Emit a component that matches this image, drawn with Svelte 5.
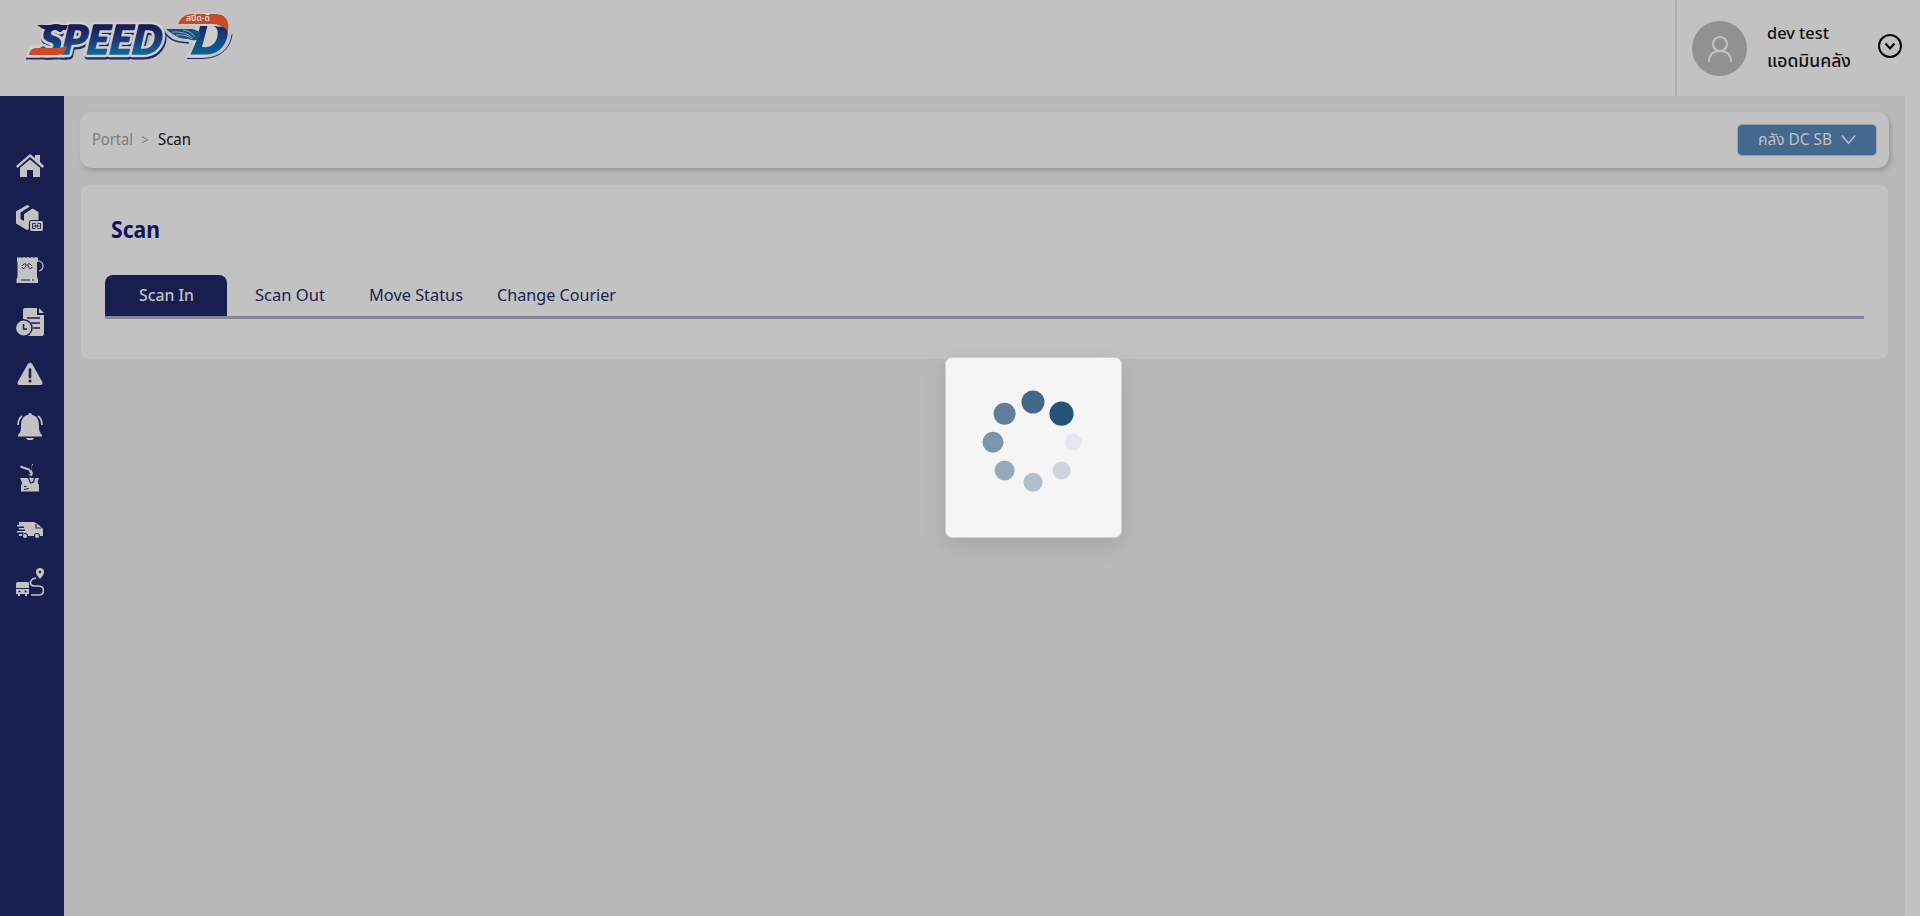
<script>
  const tabs = [
    { label: 'Scan In', left: 0, width: 122, text: 55 },
    { label: 'Scan Out', left: 28, width: 70, text: 70 },
    { label: 'Move Status', left: 44, width: 94, text: 94 },
    { label: 'Change Courier', left: 34, width: 119, text: 119 }
  ];
  const dots = [
    [60, 19, 11.5, '#456789'], [88.5, 30.7, 12.1, '#285378'],
    [100.3, 59, 8.5, '#e5e9ed'], [88.5, 87.5, 9, '#cdd4df'],
    [60, 99.3, 9.5, '#b1bfcc'], [31.6, 87.5, 10, '#96a9bb'],
    [20, 59.2, 10.5, '#7b95ab'], [31.6, 30.7, 11, '#617f9b']
  ];
</script>

{#snippet label(text, width, size, weight = 400)}
  <svg class="label" width={width} height="30" aria-label={text}>
    <text x="0" y="20" font-size={size} font-weight={weight} textLength={width} lengthAdjust="spacingAndGlyphs">{text}</text>
  </svg>
{/snippet}

<div class="page">
  <header>
    <svg class="logo" width="240" height="80" viewBox="10 0 240 80">
      <defs>
        <linearGradient id="blue" x1="0" y1="0" x2="0" y2="1">
          <stop offset=".25" stop-color="#1b1b59" /><stop offset=".6" stop-color="#174381" /><stop offset=".85" stop-color="#08739d" />
        </linearGradient>
        <linearGradient id="dBlue" gradientUnits="userSpaceOnUse" x1="0" y1="26" x2="0" y2="55">
          <stop stop-color="#1c2763" /><stop offset="1" stop-color="#08669c" />
        </linearGradient>
      </defs>
      <path d="M27 58.500h40l4-6" fill="none" stroke="#292568" stroke-width="2" />
      <g class="word" transform="translate(40 54) skewX(-6)">
        <text x="1" y="1.500" textLength="122" lengthAdjust="spacingAndGlyphs" fill="#292568" stroke="#292568" stroke-width="7">SPEED</text>
        <text x="0" y="0" textLength="122" lengthAdjust="spacingAndGlyphs" fill="#d0d0d0" stroke="#d0d0d0" stroke-width="6.500">SPEED</text>
      </g>
      <path d="M27 57.500l4-12h40l-5 12z" fill="#d0d0d0" />
      <g class="word" transform="translate(40 54) skewX(-6)">
        <text x="0" y="0" textLength="122" lengthAdjust="spacingAndGlyphs" fill="url(#blue)" stroke="url(#blue)" stroke-width="1.500">SPEED</text>
      </g>
      <path d="M38 25h31l-2 5H50l-6-1z" fill="#1b1b59" />
      <path d="M30 55q1-7 7-7h22q6 0 9-3-1 10-10 10z" fill="#c94a26" />
      <path d="M188 58.500h14c18 0 29-9 31-24" fill="none" stroke="#292568" />
      <path d="M178 24c3-8 9-11 18-11h20c12 0 16 9 13 21-3 14-11 23-26 23h-16l7-14-25-11 10-3h16l5-3z" fill="#cecece" />
      <path d="M179 24c3-7 7-10 15-10h22c10 0 15 6 13 17l-2 6c0-8-5-13-13-13z" fill="#c94a26" />
      <path d="M201 26h7.500l-5.500 21c9 1 13-3 15-9 2-7 0-11-4-12l10 1c5 2 5.500 7 4 11-3 10-10 16.500-21 16.500h-15.500l6-14z" fill="url(#dBlue)" />
      <path d="M166 33q6 8 15 9l9 1" fill="none" stroke="#292568" stroke-width="1.300" />
      <path d="M167 29h23c7 0 11 2 12 7-2 5-7 5-13 3-9 0-15-4-22-10z" fill="#175084" />
      <path d="M173 32q13-1 21 6m-17-3q10-1 16 4m-9-9q8 1 12 7" fill="none" stroke="#c5c9cf" stroke-width=".7" />
      <text class="tiny" x="187" y="21" textLength="24" lengthAdjust="spacingAndGlyphs">สปีด-ดี</text>
    </svg>
    <div class="profile">
      <div class="avatar">
        <svg width="26" height="28" viewBox="0 0 26 28" fill="none" stroke="#c2c2c2" stroke-width="2"><circle cx="13" cy="9" r="7" /><path d="M2 27c0-7 4-11 11-11s11 4 11 11" /></svg>
      </div>
      <div class="who">{@render label('dev test', 62, 17, 500)}{@render label('แอดมินคลัง', 84, 17.5, 500)}</div>
      <svg class="toggle" width="26" height="26" viewBox="0 0 26 26" fill="none" stroke="#050505" stroke-width="2"><circle cx="13" cy="13" r="11" /><path d="m8.500 10.500 4.500 5 4.500-5" /></svg>
    </div>
  </header>
  <div class="body">
    <nav>
      <svg viewBox="0 0 28 28"><path d="M0 14 14 2l5 4V3h5v7l4 4-1.500 2L14 5 1.500 16z" /><path d="m14 7.500 10 8.300V25h-7v-7h-6v7H4v-9.200z" /></svg>
      <svg viewBox="0 0 28 28"><path d="M0 7.500 11 1l3 1.500L4.500 8.500V15L8 17v-7l8.500-5.500L22.500 8v12L11 26 0 19.500z" /><rect x="13.500" y="16.500" width="14" height="11" rx="2" stroke="#191e50" stroke-width="1.200" /><path d="M16.500 19.500h3m2 0h3v5h-3m-2 0h-3v-5m3 1v3m2-3v3m-4-1.500h6" fill="none" stroke="#191e50" stroke-width=".9" /></svg>
      <svg viewBox="0 0 28 28"><path d="M1 1q1.500 1.500 3 0 2 1.500 4 0 2 1.500 4 0 2 1.500 4 0 2 1.500 4 0l2 1v4H1zM1.500 6h19.500v15l1 2v4H.5v-4l1-2z" /><path d="M5 24h9m2 0h2M6 10c2-3 5-3 4 0-1 3-4 3-4 1m10-1c-2-3-5-3-4 0 1 3 4 3 4 1" fill="none" stroke="#191e50" /><path d="M22 5h1q4 1 4 5t-4 5" fill="none" stroke="#c2c2c2" stroke-width="1.200" /></svg>
      <svg viewBox="0 0 28 28"><path d="M7 2q0-2 2-2h12v7h7v19q0 2-2 2H7z" /><path d="m23 0 5 5h-5z" /><path d="M11 10h13m-9 5h9m-7 5h7" stroke="#191e50" stroke-width="1.300" /><circle cx="7.700" cy="20" r="8.300" stroke="#191e50" stroke-width="1.400" /><path d="M7.500 16v5H11" fill="none" stroke="#191e50" stroke-width="1.500" /></svg>
      <svg viewBox="0 0 28 28"><path d="M11.800 4q2.200-3 4.400 0L26.300 22q1 3-2 3H3.700q-3 0-2-3z" /><path d="M14 9.500v7.500" stroke="#191e50" stroke-width="2.600" stroke-linecap="round" /><circle cx="14" cy="21" r="1.500" fill="#191e50" /></svg>
      <svg viewBox="0 0 28 28"><path d="M12 3a2 2 0 0 1 4 0c6 1 7 6 7 12 0 4 1 6 3 8v1.500H2V23c2-2 3-4 3-8 0-6 1-11 7-12zm-2 23h8c-1 3-7 3-8 0z" /><path d="M6 4Q2 7 2 13M22 4q4 3 4 9" fill="none" stroke="#c2c2c2" stroke-width="1.700" /></svg>
      <svg viewBox="0 0 28 28"><path d="M4 14h19l-1.500 4 1.500 3v6.500H5V22l1-3z" /><path d="m12.500 14 2 5 3-1 1-4" fill="none" stroke="#191e50" stroke-width="1.200" /><path d="m14.500 13.500 1 2" stroke="#c2c2c2" /><path d="M4.500 2.500 14 6" fill="none" stroke="#c2c2c2" stroke-width="2.200" /><path d="m16 0-1 6-2 1 1 2 1 1-3 1 4 1 1-3-2-4 2-5z" /><path d="m8 25.500 5-1m-5-2h2.500" stroke="#191e50" /></svg>
      <svg viewBox="0 0 28 28"><path d="M3 6h15l5 3 4 4v7h-3a3 3 0 0 0-6 0h-6a3 3 0 0 0-6 0H3v-2h5v-1.500H1V15h8v-1.500H3V12h5v-1.500H1V9h2z" /><path d="M20 8v4h5" fill="none" stroke="#191e50" stroke-width="1.100" /><circle cx="9" cy="20" r="2.100" /><circle cx="21" cy="20" r="2.100" /></svg>
      <svg viewBox="0 0 28 28"><path d="M1.500 14h10q1.500 0 1.500 1.500V20H0v-4.500Q0 14 1.500 14zM0 21h13v5h-2v2H9v-2H4v2H2v-2H0z" /><path d="M2.500 23.500h2m4 0h2" stroke="#191e50" stroke-width="1.500" /><path fill-rule="evenodd" d="M24 0a4 4 0 0 1 4 4q0 3-4 7-4-4-4-7a4 4 0 0 1 4-4zm0 2.700a1.300 1.300 0 1 0 0 2.600 1.300 1.300 0 0 0 0-2.600z" /><path d="M20 10c-7 1-7 8-2 8h5c6 0 6 9 0 9h-8" fill="none" stroke="#c2c2c2" stroke-width="1.700" /></svg>
    </nav>
    <main>
      <section class="crumbs">
        <span class="muted">{@render label('Portal', 41, 15.5)}</span><span class="muted sep">{@render label('>', 8, 15)}</span>{@render label('Scan', 33, 15.5)}
        <button>{@render label('คลัง DC SB', 74, 15.5)}<svg class="chev" width="15" height="12" viewBox="0 0 15 12" fill="none" stroke="#c2c2c2" stroke-width="1.400"><path d="m1 1.500 6.500 8L14 1.500" /></svg></button>
      </section>
      <section class="panel">
        <h1>{@render label('Scan', 49, 23, 700)}</h1>
        <div class="tabs">
          {#each tabs as tab, i}
            <div class="tab" class:active={i === 0} style="width: {tab.width}px; margin-left: {tab.left}px">{@render label(tab.label, tab.text, 17, i === 0 ? 500 : 400)}</div>
          {/each}
        </div>
      </section>
    </main>
  </div>
  <div class="loader">
    <svg width="120" height="120" viewBox="0 0 120 120">
      {#each dots as [x, y, r, color]}<circle cx={x} cy={y} {r} fill={color} />{/each}
    </svg>
  </div>
</div>

<style>
  :global(body) { margin: 0; overflow: hidden; }
  .page { height: 916px; display: flex; flex-direction: column; background: #c2c2c2; color: #111; font-family: "Noto Sans", "Noto Sans Thai", sans-serif; }
  svg { display: block; flex: none; }
  .label { overflow: visible; }
  .label text { fill: currentColor; }
  header { height: 96px; display: flex; justify-content: space-between; }
  .logo { margin-left: 9px; }
  .word { font: italic 900 40px Lato, sans-serif; stroke-linejoin: round; }
  .tiny { font-size: 8px; font-weight: 600; fill: #ddd; }
  .profile { width: 245px; box-sizing: border-box; border-left: 2px solid #aeaeb3; display: flex; align-items: flex-start; }
  .avatar { width: 55px; height: 55px; margin: 21px 0 0 15px; border-radius: 50%; background: #919191; display: grid; place-items: center; }
  .who { width: 84px; margin: 19px 0 0 20px; display: grid; }
  .who .label { height: 28px; }
  .toggle { margin: 33px 0 0 25.5px; }
  .body { height: 820px; display: flex; }
  nav { width: 64px; box-sizing: border-box; padding: 56px 0 0 16px; background: #191e50; display: flex; flex-direction: column; gap: 24px; }
  nav svg { width: 28px; height: 28px; fill: #c2c2c2; }
  main { width: 1841px; box-sizing: border-box; padding: 16px; background: #b9b9b9; display: flex; flex-direction: column; gap: 17px; }
  .crumbs { height: 56px; box-sizing: border-box; padding: 0 12px; display: flex; align-items: center; border-radius: 12px; background: #c2c2c2; box-shadow: 2px 3px 5px #999; }
  .muted { color: #7d7d7d; }
  .sep { margin: 0 9px 0 8px; }
  button { width: 140px; height: 32px; margin-left: auto; padding: 0 0 0 20px; display: flex; align-items: center; gap: 9px; border: 1px solid #9ba4ad; border-radius: 5px; background: #43698f; color: #c2c2c2; font-family: inherit; }
  .panel { height: 174px; margin: 0 1px; box-sizing: border-box; padding: 33px 24px 0; border-radius: 8px; background: #c2c2c2; }
  h1 { margin: 0 0 27px 6px; color: #11145a; }
  .tabs { height: 41px; display: flex; color: #191e50; border-bottom: 3px solid #85869a; }
  .tab { display: flex; align-items: center; justify-content: center; }
  .active { background: #191e50; color: #c2c2c2; border-radius: 8px 8px 0 0; }
  .loader { position: absolute; left: 945px; top: 357px; width: 177px; height: 181px; box-sizing: border-box; padding: 25px 0 0 27px; border: 1px solid #d1d1d1; border-radius: 7px; background: #f5f5f5; box-shadow: 0 7px 20px #8886; }
</style>
